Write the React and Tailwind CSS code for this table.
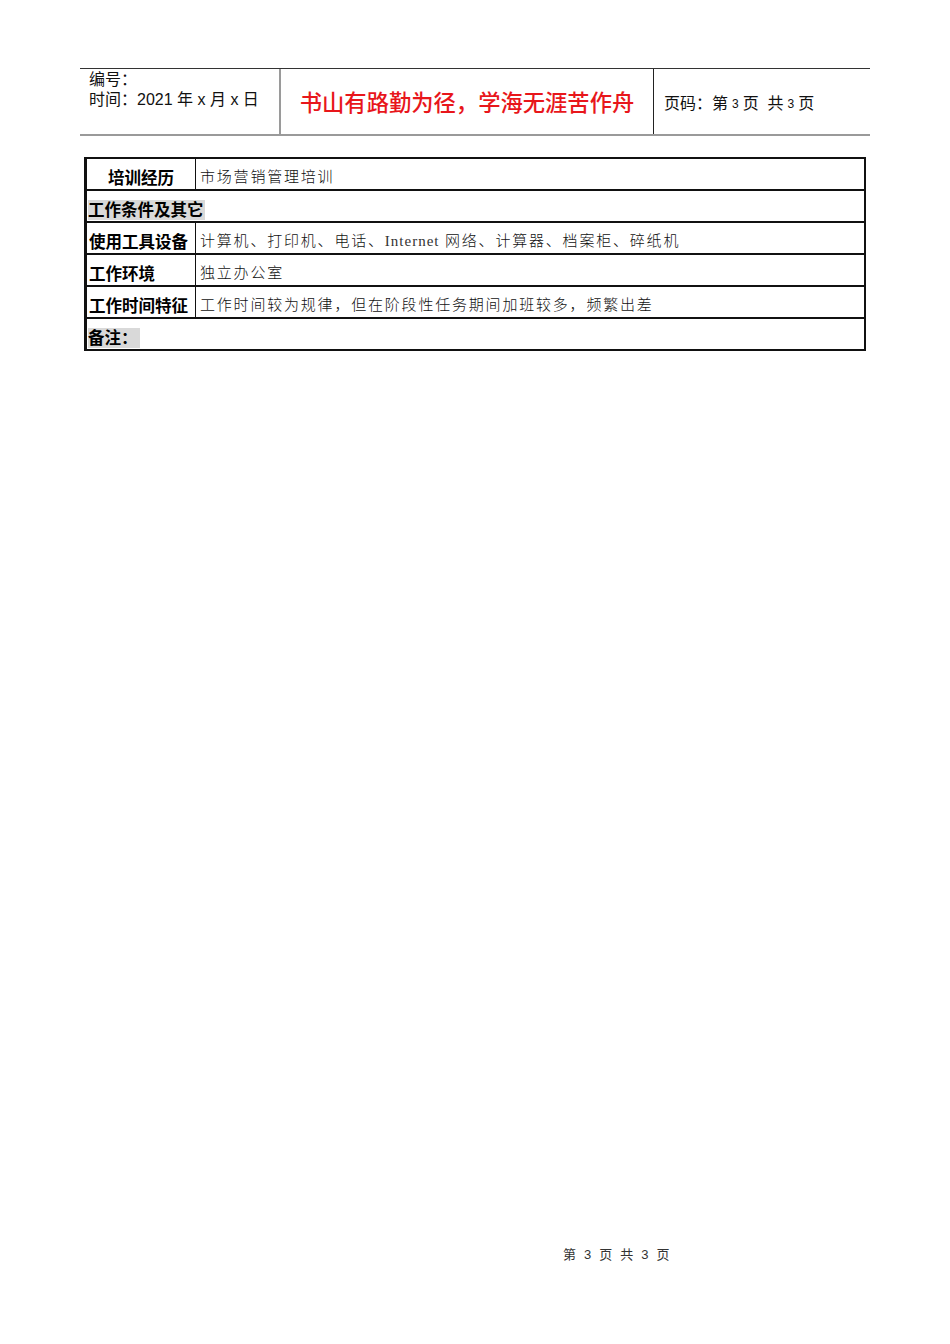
import React from 'react'

const sans = "font-['Liberation_Sans','Noto_Sans_CJK_SC',sans-serif]"
const serif = "font-['Liberation_Serif','Noto_Sans_CJK_SC',serif]"

function Row({ label, value, center, last }) {
  return (
    <div className={`flex h-[32px] ${last ? '' : 'border-b-2 border-[#111]'}`}>
      <div
        className={`w-[109px] shrink-0 border-r border-[#111] flex items-end pb-0 leading-[22px] text-[16.5px] font-bold text-black ${center ? 'justify-center' : 'pl-[2px]'}`}
      >
        {label}
      </div>
      <div className={`flex-1 flex items-end pb-[1px] pl-[4px] leading-[22px] text-[15px] tracking-[1.8px] text-[#111] font-light ${serif}`}>
        <span>{value}</span>
      </div>
    </div>
  )
}

export default function App() {
  return (
    <div className={`min-h-[1344px] w-[950px] bg-white flex flex-col ${sans}`}>
      {/* page header */}
      <div className="ml-[80px] mt-[68px] w-[790px] h-[68px] border-t border-[#333] border-b-2 border-b-[#9a9a9a] grid grid-cols-[201px_373px_1fr]">
        <div className="border-r-2 border-[#9a9a9a] pl-[9px] pt-[1px] text-[16px] leading-[20px] text-[#111]">
          <div>编号：</div>
          <div>时间：2021 年 x 月 x 日</div>
        </div>
        <div className="border-r border-[#222] flex items-center justify-center pt-[4px] text-[22.3px] font-medium text-[#e8161b]">
          书山有路勤为径，学海无涯苦作舟
        </div>
        <div className="flex items-center pl-[10px] pt-[4px] text-[16px] text-[#111]">
          页码：第<span className="text-[12px] mx-[4px]">3</span>页 &nbsp;共<span className="text-[12px] mx-[4px]">3</span>页
        </div>
      </div>

      {/* table */}
      <div className="ml-[84px] mt-[21px] w-[782px] border-2 border-l-[3px] border-[#111]">
        <Row label="培训经历" value="市场营销管理培训" center />
        <div className="h-[32px] border-b-2 border-[#111] flex items-end pb-[1px] pl-[1px]">
          <span className="bg-[#d9d9d9] text-[16.5px] font-bold leading-[20px] pr-[1px]">工作条件及其它</span>
        </div>
        <Row
          label="使用工具设备"
          value={<>计算机、打印机、电话、<span className="font-normal tracking-[1px] text-[#333]">Internet</span> 网络、计算器、档案柜、碎纸机</>}
        />
        <Row label="工作环境" value="独立办公室" />
        <Row label="工作时间特征" value="工作时间较为规律，但在阶段性任务期间加班较多，频繁出差" />
        <div className="h-[30px] flex items-end pb-[1px] pl-[1px]">
          <span className="bg-[#d9d9d9] text-[16.5px] font-bold leading-[20px] pr-[2px]">备注：</span>
        </div>
      </div>

      {/* page footer */}
      <div className="mt-auto mb-[80px] ml-[563px] text-[13px] text-[#333] flex gap-[8px]">
        <span>第</span><span>3</span><span>页</span><span>共</span><span>3</span><span>页</span>
      </div>
    </div>
  )
}
